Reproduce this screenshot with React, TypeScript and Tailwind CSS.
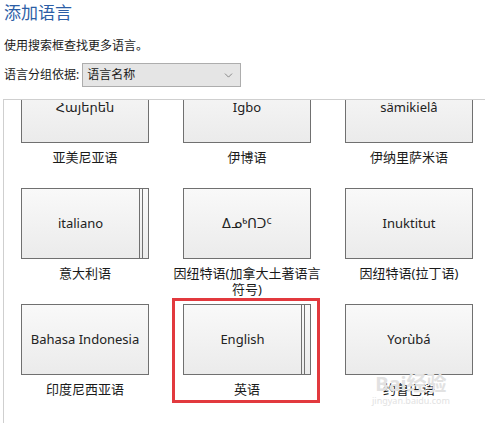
import { ChevronDown } from 'lucide-react';

type Lang = { native: string; name: string; stacked?: boolean; marked?: boolean };

const langs: Lang[] = [
  { native: 'Հայերեն', name: '亚美尼亚语' },
  { native: 'Igbo', name: '伊博语' },
  { native: 'sämikielâ', name: '伊纳里萨米语' },
  { native: 'italiano', name: '意大利语', stacked: true },
  { native: 'ᐃᓄᒃᑎᑐᑦ', name: '因纽特语(加拿大土著语言符号)' },
  { native: 'Inuktitut', name: '因纽特语(拉丁语)' },
  { native: 'Bahasa Indonesia', name: '印度尼西亚语' },
  { native: 'English', name: '英语', stacked: true, marked: true },
  { native: 'Yorùbá', name: '约鲁巴语' },
];

const cjk = "font-['Segoe_UI','Noto_Sans','Noto_Sans_CJK_SC','DejaVu_Sans',sans-serif]";

function Tile({ lang }: { lang: Lang }) {
  const face = 'bg-gradient-to-b from-[#f9f9f9] to-[#ebebeb]';
  return (
    <div className="relative flex h-[116px] flex-col items-center">
      {lang.marked && (
        <div className="pointer-events-none absolute left-[6px] top-[-6px] h-[105px] w-[148px] border-[3px] border-[#e2393e]" />
      )}
      {lang.stacked ? (
        <div className={`flex h-[71px] w-[128px] border border-[#707070] ${face}`}>
          <div className="flex flex-1 items-center justify-center border-r border-[#707070] text-[13px] text-[#222]">
            {lang.native}
          </div>
          <div className="w-[2px]" />
          <div className="w-px bg-[#707070]" />
          <div className="w-[5px]" />
        </div>
      ) : (
        <div
          className={`flex h-[71px] w-[128px] items-center justify-center border border-[#707070] text-[13px] text-[#222] ${face}`}
        >
          {lang.native}
        </div>
      )}
      <div className="mt-[6px] w-[150px] text-center text-[13px] leading-[16px] text-[#1a1a1a]">
        {lang.name}
      </div>
    </div>
  );
}

export default function App() {
  return (
    <div className={`relative h-[423px] w-[485px] overflow-hidden bg-white ${cjk}`}>
      <div className="px-[4px] pt-[2px] text-[17px] leading-[22px] text-[#2c5ea6]">添加语言</div>
      <div className="mt-[14px] px-[4px] text-[12px] leading-[16px] text-[#1a1a1a]">使用搜索框查找更多语言。</div>
      <div className="mt-[9px] flex items-center gap-[3px] px-[4px]">
        <span className="text-[12px] text-[#1a1a1a]">语言分组依据:</span>
        <div className="flex h-[24px] w-[159px] items-center justify-between border border-[#adadad] bg-[#e5e5e5] pl-[4px] pr-[5px] text-[12px] text-[#1a1a1a]">
          <span>语言名称</span>
          <ChevronDown size={13} strokeWidth={1.2} className="text-[#555]" />
        </div>
      </div>
      <div className="ml-[3px] mt-[12px] h-[330px] overflow-hidden border-l border-t border-[#cfcfcf]">
        <div className="mt-[-28px] grid grid-cols-[162px_162px_162px]">
          {langs.map((l) => (
            <Tile key={l.native} lang={l} />
          ))}
        </div>
      </div>
      <div className="pointer-events-none absolute left-[372px] top-[374px] text-center leading-none text-[#e2e2e2]">
        <div className="text-[20px] font-bold">Bai经验</div>
        <div className="mt-[2px] text-[9px]">jingyan.baidu.com</div>
      </div>
    </div>
  );
}
